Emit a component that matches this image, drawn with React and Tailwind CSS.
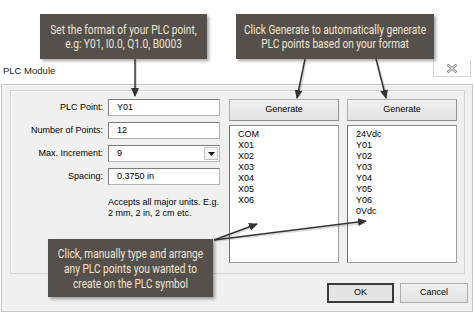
import React from 'react';

const fields = [
    { label: 'PLC Point:', value: 'Y01' },
    { label: 'Number of Points:', value: '12' },
    { label: 'Max. Increment:', value: '9', select: true },
    { label: 'Spacing:', value: '0.3750 in' },
];

const leftPoints = ['COM', 'X01', 'X02', 'X03', 'X04', 'X05', 'X06'];
const rightPoints = ['24Vdc', 'Y01', 'Y02', 'Y03', 'Y04', 'Y05', 'Y06', '0Vdc'];

const Callout = ({ className, lines, leading }) => (
    <div className={`absolute flex flex-col justify-center bg-[#55504b] shadow-[2px_2px_3px_rgba(0,0,0,0.35)] ${className}`}>
        <div className={`-mx-[50px] scale-x-[0.78] text-center whitespace-nowrap font-['Roboto',sans-serif] text-[13px] text-[#f1e5d2] ${leading}`}>
            {lines.map((l, i) => (
                <div key={i}>{l}</div>
            ))}
        </div>
    </div>
);

const PointList = ({ items }) => (
    <div className="mt-[4px] h-[138px] bg-white border border-[#a0a0a0] border-l-[#6f6f6f] border-t-[#8a8a8a] pt-[3px] pl-[8px] leading-[11px]">
        {items.map((p) => (
            <div key={p}>{p}</div>
        ))}
    </div>
);

const GenerateButton = () => (
    <button className="h-[22px] w-full bg-gradient-to-b from-[#f2f2f2] to-[#e2e2e2] border border-[#adadad] border-b-[#8f8f8f] border-r-[#8f8f8f]">
        Generate
    </button>
);

const App = () => {
    return (
        <div className="relative w-[474px] h-[314px] overflow-hidden bg-white text-[9px] text-black font-['Liberation_Sans',Arial,sans-serif]">
            {/* title bar */}
            <div className="h-[84px] flex items-end justify-between">
                <div className="pl-[3px] pb-[8px] text-[9.5px] leading-[11px] text-[#222]">PLC Module</div>
                <div className="pr-[3px] pb-[7px]">
                    <div className="w-[38px] h-[17px] flex items-center justify-center bg-white border border-[#d6d6d6] border-t-0">
                        <svg width="10" height="9" viewBox="0 0 10 9">
                            <path d="M1.5 1.5 L8.5 7.5 M8.5 1.5 L1.5 7.5" stroke="#8a8a8a" strokeWidth="2.6" strokeLinecap="square" />
                            <path d="M1.5 1.5 L8.5 7.5 M8.5 1.5 L1.5 7.5" stroke="#ffffff" strokeWidth="1" strokeLinecap="square" />
                        </svg>
                    </div>
                </div>
            </div>

            {/* dialog body */}
            <div className="mx-[1px] h-[228px] bg-[#f0f0f0] border border-[#c6c6c6]">
                <div className="mt-[5px] ml-[8px] w-[455px] h-[184px] border border-[#d4d4d4] shadow-[inset_1px_1px_0_#ffffff] flex pt-[8px]">
                    <div className="w-[209px] flex flex-col">
                        <div className="flex flex-col gap-[6px]">
                            {fields.map((f) => (
                                <div key={f.label} className="flex items-center">
                                    <div className="w-[92px] text-right">{f.label}</div>
                                    <div className="ml-[5px] w-[112px] h-[17px] bg-white border border-[#b5b5b5] border-t-[#7c7c7c] border-l-[#7c7c7c] flex items-center">
                                        <span className="pl-[8px] flex-1">{f.value}</span>
                                        {f.select && (
                                            <div className="w-[14px] h-[13px] mr-[1px] flex items-center justify-center bg-[#f4f4f4] border border-[#c4c4c4]">
                                                <svg width="7" height="4" viewBox="0 0 7 4">
                                                    <path d="M0 0 H7 L3.5 4 Z" fill="#111" />
                                                </svg>
                                            </div>
                                        )}
                                    </div>
                                </div>
                            ))}
                        </div>
                        <div className="mt-[12px] ml-[97px] leading-[11px]">
                            <div>Accepts all major units. E.g.</div>
                            <div>2 mm, 2 in, 2 cm etc.</div>
                        </div>
                    </div>
                    <div className="ml-[9px] w-[110px]">
                        <GenerateButton />
                        <PointList items={leftPoints} />
                    </div>
                    <div className="ml-[8px] w-[110px]">
                        <GenerateButton />
                        <PointList items={rightPoints} />
                    </div>
                </div>
                <div className="mt-[9px] pr-[4px] flex justify-end gap-[6px]">
                    <button className="w-[67px] h-[20px] bg-[#e5e5e5] border-2 border-[#3a3a3a]">OK</button>
                    <button className="w-[68px] h-[20px] bg-gradient-to-b from-[#f2f2f2] to-[#e2e2e2] border border-[#adadad]">Cancel</button>
                </div>
            </div>

            {/* callouts */}
            <Callout
                className="left-[40px] top-[14px] w-[167px] h-[45px]"
                leading="leading-[14px]"
                lines={['Set the format of your PLC point,', 'e.g: Y01, I0.0, Q1.0, B0003']}
            />
            <Callout
                className="left-[236px] top-[14px] w-[198px] h-[45px]"
                leading="leading-[14px]"
                lines={['Click Generate to automatically generate', 'PLC points based on your format']}
            />
            <Callout
                className="left-[48px] top-[239px] w-[165px] h-[58px]"
                leading="leading-[15px]"
                lines={['Click, manually type and arrange', 'any PLC points you wanted to', 'create on the PLC symbol']}
            />

            {/* arrows */}
            <svg className="absolute inset-0 pointer-events-none" width="474" height="314" viewBox="0 0 474 314">
                <defs>
                    <marker id="head" markerUnits="userSpaceOnUse" markerWidth="9" markerHeight="8" refX="8" refY="4" orient="auto">
                        <path d="M0 0 L9 4 L0 8 Z" fill="#333" />
                    </marker>
                </defs>
                <g stroke="#00000022" strokeWidth="2">
                    <path d="M136 60 L136 94" />
                    <path d="M306 60 L299 97" />
                    <path d="M377 60 L387 97" />
                    <path d="M215 241 L256 226" />
                    <path d="M215 241 L365 223" />
                </g>
                <g stroke="#333" strokeWidth="1.5" fill="none" markerEnd="url(#head)">
                    <path d="M135 59 L135 96" />
                    <path d="M305 59 L297 98" />
                    <path d="M376 59 L386 98" />
                    <path d="M214 240 L257 224" />
                    <path d="M214 240 L366 221" />
                </g>
            </svg>
        </div>
    );
};

export default App;
